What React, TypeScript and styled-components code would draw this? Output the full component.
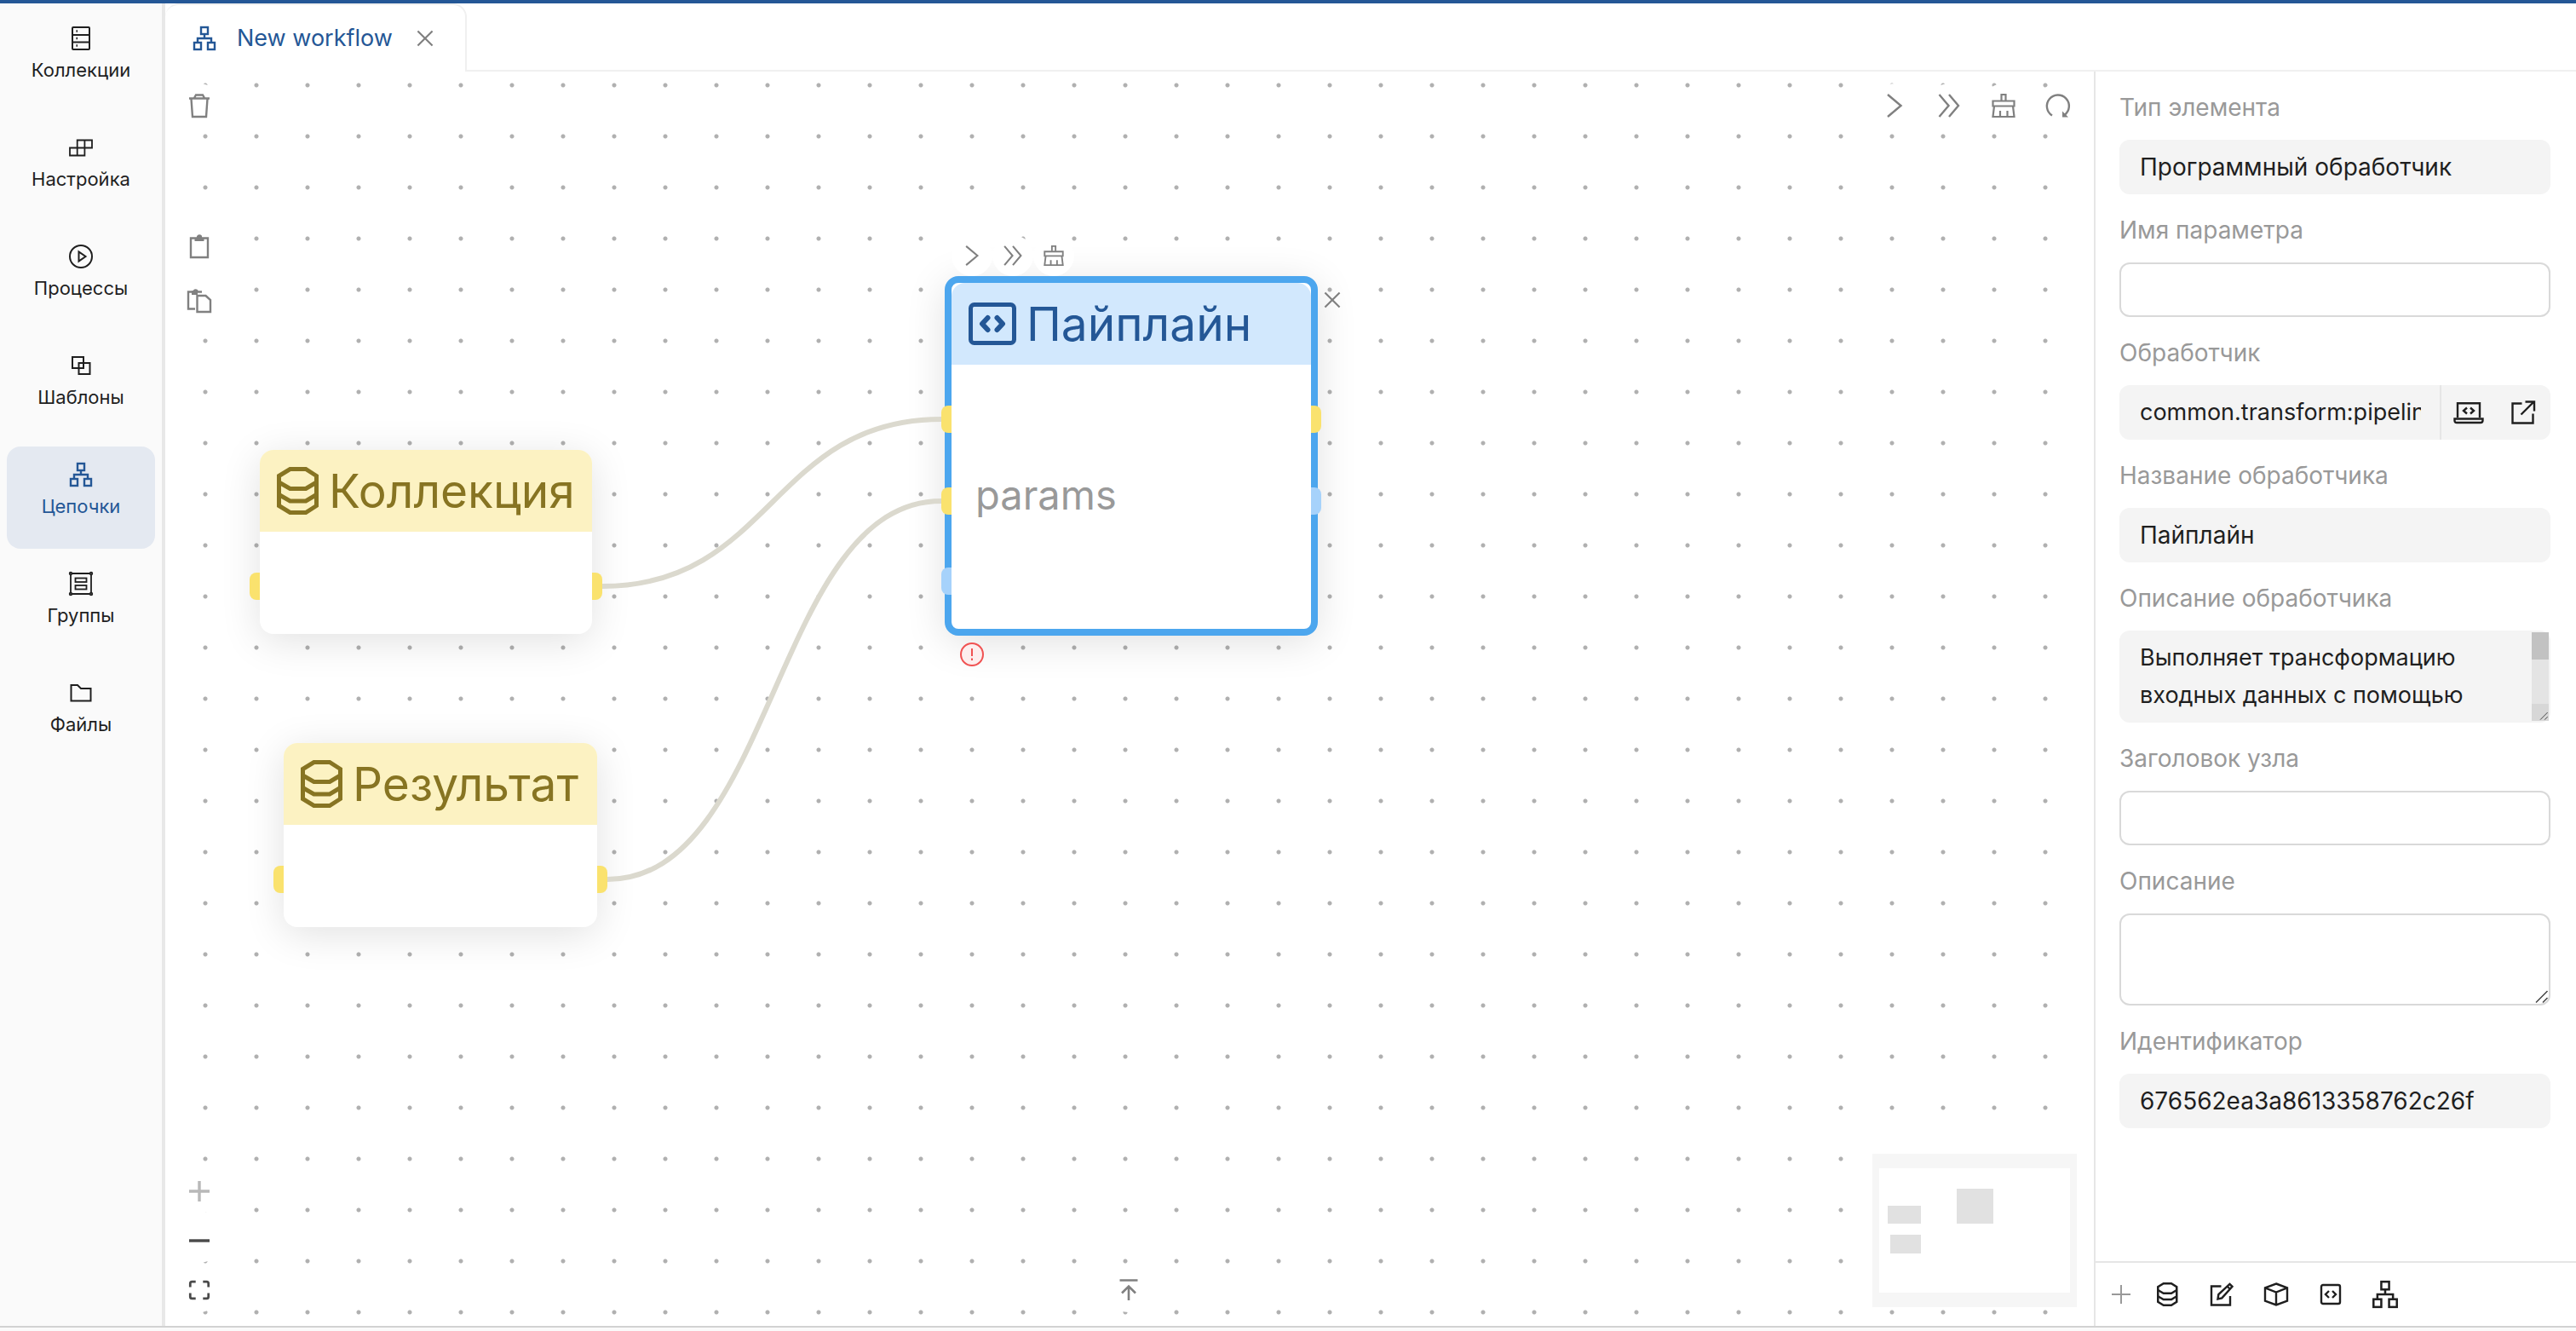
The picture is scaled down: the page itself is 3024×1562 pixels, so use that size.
import React, { useId, useState } from 'react';
import styled, { createGlobalStyle, css } from 'styled-components';

const color = {
  brand: '#245796',
  ink: '#1f1f1f',
  muted: '#999999',
  tool: '#808080',
  line: '#e6e6e6',
  soft: '#f4f4f4',
  yellow: '#fae26e',
  sky: '#a6d2fb',
};

const GlobalStyle = createGlobalStyle`
  *, *::before, *::after { box-sizing: border-box; }
  html, body, #root { height: 100%; }
  body {
    margin: 0;
    background: #ffffff;
    color: ${color.ink};
    font-family: Inter, "Noto Sans", sans-serif;
    font-size: 28px;
    line-height: 44px;
  }
  button, input, textarea { font: inherit; color: inherit; }
  button { border: 0; padding: 0; background: none; cursor: pointer; }
  svg { display: block; flex: none; }
`;

/* ---------- icons ---------- */

type IconProps = { size?: number; weight?: number };

const Svg = styled.svg.attrs({ fill: 'none', stroke: 'currentColor', 'aria-hidden': true })`
  overflow: visible;
`;

const Icon = ({ size = 28, weight = 2, children }: IconProps & { children: React.ReactNode }) => (
  <Svg width={size} height={size} viewBox="0 0 28 28" strokeWidth={weight}>
    {children}
  </Svg>
);

const ServerIcon = () => (
  <Icon>
    <rect x="4" y="1" width="20" height="26" rx="1" />
    <path d="M4 10h20M4 18.500h20" />
    <path d="M8.500 5.500h1.500M8.500 14h1.500M8.500 22.500h1.500" strokeWidth="2.500" />
  </Icon>
);
const BlocksIcon = () => (
  <Icon>
    <path d="M1 14.500h8.700v9H1zM9.700 14.500h8.700v9H9.700zM9.700 5.500h8.700v9H9.700zM18.400 5.500H27v9h-8.600z" strokeWidth="1.800" />
  </Icon>
);
const PlayIcon = () => (
  <Icon>
    <circle cx="14" cy="14" r="13" />
    <path d="M11.500 8.500v11l8-5.500z" />
  </Icon>
);
const OverlapIcon = () => (
  <Icon>
    <rect x="4" y="4" width="13" height="13" />
    <rect x="11.500" y="11" width="13" height="13" />
  </Icon>
);
const TreeIcon = (p: IconProps) => (
  <Icon {...p}>
    <rect x="10" y="1" width="8" height="8" />
    <rect x="2" y="19" width="8" height="8" />
    <rect x="18" y="19" width="8" height="8" />
    <path d="M14 9v5M6 19v-5h16v5" />
  </Icon>
);
const GroupIcon = () => (
  <Icon weight={1.8}>
    <path d="M4 2h20M4 26h20M2 4v20M26 4v20" />
    <circle cx="2" cy="2" r="1.300" />
    <circle cx="26" cy="2" r="1.300" />
    <circle cx="2" cy="26" r="1.300" />
    <circle cx="26" cy="26" r="1.300" />
    <rect x="7.500" y="7.500" width="13" height="4.500" />
    <rect x="7.500" y="16" width="13" height="4.500" />
  </Icon>
);
const FolderIcon = () => (
  <Icon>
    <path d="M2.500 5h7.500l4 4h11.500v14.500h-23z" />
  </Icon>
);
const CloseIcon = () => (
  <Icon size={20}>
    <path d="M2 2l24 24M26 2L2 26" strokeWidth="3" />
  </Icon>
);
const TrashIcon = () => (
  <Icon weight={2.4}>
    <path d="M2 5.500h24M8 5l2-3.500h8L20 5M4.500 6L6 27h16l1.500-21" />
  </Icon>
);
const ClipboardIcon = () => (
  <Icon weight={2.4}>
    <path d="M4 4.500h20V27H4z" />
    <path d="M8.500 4h3a2.500 2.500 0 0 1 5 0h3v4h-11z" fill="currentColor" stroke="none" />
    <circle cx="14" cy="3.500" r="2" />
  </Icon>
);
const PasteIcon = () => (
  <Icon weight={2.4}>
    <path d="M9 23.500H1V3.500h16" />
    <path d="M5 3.500h2.500a2 2 0 0 1 4 0" />
    <path d="M5 4h7v3H5z" fill="currentColor" stroke="none" />
    <path d="M11.500 8h10L27 13v14H11.500z" />
  </Icon>
);
const RunIcon = ({ size }: IconProps) => (
  <Icon size={size} weight={2.4}>
    <path d="M6 1l15.500 13L6 27" />
  </Icon>
);
const RunAllIcon = ({ size }: IconProps) => (
  <Icon size={size} weight={2.4}>
    <path d="M2.500 1l11 13-11 13M14 1l11 13-11 13" />
  </Icon>
);
const BrushIcon = ({ size }: IconProps) => (
  <Icon size={size} weight={2.2}>
    <path d="M11.500 8V1h5v7" />
    <path d="M1.500 8.500h25v6h-25z" />
    <path d="M3 14.500L1.500 27h25L25 14.500M10 20v7M18.500 20v7" />
  </Icon>
);
const ReloadIcon = () => (
  <Icon weight={2.4}>
    <path d="M7 25.500a13 13 0 1 1 14.500-.5" />
    <path d="M19 20.500v7h7z" fill="currentColor" stroke="none" />
  </Icon>
);
const ExpandUpIcon = () => (
  <Icon weight={2.6}>
    <path d="M3.500 2.500h21M14 26V9M6 17.500l8-8 8 8" />
  </Icon>
);
const PlusIcon = ({ size = 24, weight = 4 }: IconProps) => (
  <Icon size={size} weight={weight}>
    <path d="M0 14h28M14 0v28" />
  </Icon>
);
const MinusIcon = () => (
  <Icon size={24} weight={4}>
    <path d="M0 14h28" />
  </Icon>
);
const FitIcon = () => (
  <Icon size={24} weight={3.2}>
    <path d="M1.500 10V5q0-2.500 2.500-2.500h5M19 2.500h5q2.500 0 2.500 2.500v5M26.500 18v5q0 2.500-2.500 2.500h-5M9 25.500H4q-2.500 0-2.500-2.500v-5" />
  </Icon>
);
const DatabaseIcon = ({ size = 56 }: IconProps) => (
  <Svg height={size} width={(size * 49) / 56} viewBox="0 0 49 56" strokeWidth="5">
    <path d="M15.500 2.500H34L46.500 10.500V45.500L34 53.500H15.500L2.500 45.500V10.500Z" />
    <path d="M2.500 18L15.500 25.500H34L46.500 18M2.500 32.500L15.500 40H34L46.500 32.500" />
  </Svg>
);
const CodeBlockIcon = () => (
  <Svg width={56} height={50} viewBox="0 0 56 50" strokeWidth="5">
    <rect x="2.500" y="2.500" width="51" height="45" rx="4" />
    <path d="M22.500 18l-6.500 7 6.500 7M33.500 18l6.500 7-6.500 7" strokeWidth="6" strokeLinecap="round" strokeLinejoin="round" />
  </Svg>
);
const CodeIcon = () => (
  <Icon weight={2.4}>
    <rect x="3" y="3" width="22" height="22" rx="2" />
    <path d="M12 10l-4 4 4 4M16 10l4 4-4 4" />
  </Icon>
);
const EditIcon = () => (
  <Icon weight={2.4}>
    <path d="M13.500 4.500H2v22h22V16" />
    <path d="M9.500 19.500l.8-5.300L23.500 1.800l3 3L14.300 18.300z M20.500 4.500l3.500 3.500" />
  </Icon>
);
const CubeIcon = () => (
  <Icon weight={2.4}>
    <path d="M14 1.500l13 4.800v15.400l-13 4.800-13-4.800V6.300zM1 6.300l13 5.200 13-5.200M14 11.500v15" />
  </Icon>
);
const LaptopIcon = () => (
  <Svg width={36} height={28} viewBox="0 0 36 28" strokeWidth="2.400">
    <path d="M5 20V3.200h26V20" />
    <path d="M1.500 21.500h33v2q0 2.500-2.500 2.500H4q-2.500 0-2.500-2.500z" />
    <path d="M16 8.500l-4 3.500 4 3.500M20 8.500l4 3.500-4 3.500" />
  </Svg>
);
const ExternalIcon = () => (
  <Icon weight={2.4}>
    <path d="M12.500 3.500H1.500v23h24V15.500M11.500 16.500L26 2M16.500 1.500h10.500v11" />
  </Icon>
);
const GripIcon = ({ size = 14 }: IconProps) => (
  <Svg width={size} height={size} viewBox="0 0 14 14" strokeWidth="1.500">
    <path d="M0 13.500L13.500 0M8 13.500L13.500 8" />
  </Svg>
);

/* ---------- frame ---------- */

const Shell = styled.div`
  display: flex;
  flex-direction: column;
  height: 100vh;
  border-top: 4px solid ${color.brand};
`;
const Columns = styled.div`
  display: flex;
  flex: 1;
  min-height: 0;
`;
const BottomStrip = styled.footer`
  height: 6px;
  border-top: 2px solid #d2d2d2;
  background: #fafafa;
`;

const Sidebar = styled.nav`
  display: flex;
  flex-direction: column;
  gap: 8px;
  width: 194px;
  padding: 8px;
  border-right: 4px solid #e8e8e8;
  background: #fafafa;
`;
const NavItem = styled.button<{ $active?: boolean }>`
  display: flex;
  flex-direction: column;
  align-items: center;
  gap: 9px;
  height: 120px;
  padding-top: 19px;
  border-radius: 16px;
  font-size: 22px;
  line-height: 28px;
  ${(p) =>
    p.$active &&
    css`
      background: #e4e9f1;
      color: ${color.brand};
    `}
`;

const Workspace = styled.main`
  display: flex;
  flex: 1;
  flex-direction: column;
  min-width: 0;
`;
const TabBar = styled.div`
  display: flex;
  height: 80px;
`;
const Tab = styled.div`
  display: flex;
  align-items: center;
  width: 354px;
  padding: 0 37px 0 32px;
  border-top: 2px solid #f0f0f0;
  border-right: 2px solid #f0f0f0;
  border-radius: 16px 16px 0 0;
  color: ${color.brand};
`;
const TabTitle = styled.button`
  display: flex;
  flex: 1;
  align-items: center;
  gap: 24px;
  font-size: 27px;
`;
const TabClose = styled.button`
  color: ${color.tool};
`;
const TabRest = styled.div`
  flex: 1;
  border-bottom: 2px solid #f0f0f0;
`;
const Split = styled.div`
  display: flex;
  flex: 1;
  min-height: 0;
`;

/* ---------- canvas ---------- */

const Canvas = styled.section`
  position: relative;
  display: flex;
  flex: 1;
  flex-direction: column;
  justify-content: space-between;
  min-width: 0;
  overflow: hidden;
  padding: 14px 16px 16px 14px;
  background: radial-gradient(circle, #b0b0b0 2px, transparent 3px) 17px -14px / 60px 60px #ffffff;
`;
const TopTools = styled.div`
  display: flex;
  justify-content: space-between;
  align-items: flex-start;
`;
const BottomTools = styled.div`
  display: grid;
  grid-template-columns: 1fr auto 1fr;
  align-items: end;
`;
const ToolColumn = styled.div<{ $gap: number }>`
  display: flex;
  flex-direction: column;
  gap: ${(p) => p.$gap}px;
`;
const ToolRow = styled.div`
  display: flex;
  gap: 12px;
`;
const Spacer = styled.div`
  height: 89px;
`;
const RoundTool = styled.button<{ $tone?: string }>`
  display: grid;
  place-items: center;
  width: 52px;
  height: 52px;
  border-radius: 50%;
  background: #ffffff;
  color: ${(p) => p.$tone ?? color.tool};
`;
const Minimap = styled.div`
  display: flex;
  justify-self: end;
  width: 240px;
  height: 180px;
  margin: 0 4px 6px 0;
  padding: 17px 8px;
  background: #f6f6f6;
`;
const MiniView = styled.div`
  position: relative;
  flex: 1;
  background: #ffffff;
`;
const MiniNode = styled.span<{ $x: number; $y: number; $w: number; $h: number }>`
  position: absolute;
  left: ${(p) => p.$x}px;
  top: ${(p) => p.$y}px;
  width: ${(p) => p.$w}px;
  height: ${(p) => p.$h}px;
  background: #e1e1e1;
`;
const Edges = styled.svg`
  position: absolute;
  inset: 0;
  width: 100%;
  height: 100%;
  fill: none;
  stroke: #dbd9ce;
  stroke-width: 6px;
  pointer-events: none;
`;

const NodeBox = styled.article<{ $x: number; $y: number; $w: number; $selected?: boolean }>`
  position: absolute;
  left: ${(p) => p.$x}px;
  top: ${(p) => p.$y}px;
  width: ${(p) => p.$w}px;
  border: ${(p) => (p.$selected ? '8px solid #4ca6ee' : '0')};
  border-radius: 16px;
  background: #ffffff;
  box-shadow: 0 8px 48px rgba(0, 0, 0, 0.12);
`;
const NodeHeader = styled.header<{ $selected?: boolean }>`
  display: flex;
  align-items: center;
  gap: 12px;
  height: 96px;
  padding: 0 20px;
  border-radius: 16px 16px 0 0;
  background: ${(p) => (p.$selected ? '#d2e8fd' : '#fcf2c2')};
  color: ${(p) => (p.$selected ? color.brand : '#877422')};
`;
const NodeTitle = styled.h2`
  margin: 0;
  font-size: 55px;
  font-weight: 400;
  line-height: 64px;
  white-space: nowrap;
`;
const NodeBody = styled.div<{ $h: number }>`
  display: flex;
  align-items: center;
  height: ${(p) => p.$h}px;
  padding: 0 28px 4px;
  color: ${color.muted};
  font-size: 47px;
`;
const Port = styled.i<{ $side: 'left' | 'right'; $y: number; $tone: string }>`
  position: absolute;
  top: ${(p) => p.$y}px;
  width: 12px;
  height: 32px;
  background: ${(p) => p.$tone};
  ${(p) =>
    p.$side === 'left'
      ? css`
          right: 100%;
          border-radius: 8px 0 0 8px;
        `
      : css`
          left: 100%;
          border-radius: 0 8px 8px 0;
        `}
`;
const NodeTools = styled.div`
  position: absolute;
  left: 0;
  bottom: calc(100% + 8px);
  display: flex;
`;
const NodeTool = styled.button`
  display: grid;
  place-items: center;
  width: 48px;
  height: 48px;
  border-radius: 50%;
  background: #ffffff;
  color: ${color.tool};
`;
const NodeClose = styled.button`
  position: absolute;
  left: calc(100% + 15px);
  top: 10px;
  color: ${color.tool};
`;
const NodeError = styled.span`
  position: absolute;
  left: 10px;
  top: calc(100% + 16px);
`;

type PortSpec = { side: 'left' | 'right'; y: number; tone: string };
type NodeProps = {
  x: number;
  y: number;
  w: number;
  body: number;
  title: string;
  icon: React.ReactNode;
  ports: PortSpec[];
  selected?: boolean;
  text?: string;
  children?: React.ReactNode;
};

const FlowNode = ({ x, y, w, body, title, icon, ports, selected, text, children }: NodeProps) => (
  <NodeBox $x={x} $y={y} $w={w} $selected={selected}>
    <NodeHeader $selected={selected}>
      {icon}
      <NodeTitle>{title}</NodeTitle>
    </NodeHeader>
    <NodeBody $h={body}>{text}</NodeBody>
    {ports.map((p) => (
      <Port key={p.side + p.y} $side={p.side} $y={p.y} $tone={p.tone} />
    ))}
    {children}
  </NodeBox>
);

const dataPorts: PortSpec[] = [
  { side: 'left', y: 144, tone: color.yellow },
  { side: 'right', y: 144, tone: color.yellow },
];
const pipelinePorts: PortSpec[] = [
  { side: 'left', y: 144, tone: color.yellow },
  { side: 'left', y: 240, tone: color.yellow },
  { side: 'left', y: 334, tone: color.sky },
  { side: 'right', y: 144, tone: color.yellow },
  { side: 'right', y: 240, tone: color.sky },
];

const curve = (x1: number, y1: number, x2: number, y2: number) => {
  const mid = (x1 + x2) / 2;
  return `M${x1} ${y1}C${mid} ${y1} ${mid} ${y2} ${x2} ${y2}`;
};

/* ---------- properties panel ---------- */

const Panel = styled.aside`
  display: flex;
  flex-direction: column;
  width: 566px;
  border-left: 2px solid ${color.line};
`;
const Form = styled.form`
  display: flex;
  flex: 1;
  flex-direction: column;
  gap: 20px;
  padding: 20px 30px 20px 28px;
`;
const Field = styled.div`
  display: flex;
  flex-direction: column;
  gap: 16px;
`;
const Label = styled.label`
  color: ${color.muted};
`;
const boxed = css<{ $filled?: boolean }>`
  width: 100%;
  min-width: 0;
  border: 2px solid ${(p) => (p.$filled ? color.soft : '#d9d9d9')};
  border-radius: 12px;
  outline: 0;
  background: ${(p) => (p.$filled ? color.soft : '#ffffff')};
`;
const Input = styled.input<{ $filled?: boolean }>`
  ${boxed}
  height: 64px;
  padding: 0 22px;
`;
const AreaWrap = styled.div`
  position: relative;
  display: flex;
`;
const Area = styled.textarea<{ $filled?: boolean }>`
  ${boxed}
  height: 108px;
  padding: 8px 40px 8px 22px;
  overflow: hidden;
  resize: none;
  font-size: 27px;
`;
const Grip = styled.span`
  position: absolute;
  right: 3px;
  bottom: 3px;
  color: #444444;
`;
const ScrollTrack = styled.span`
  position: absolute;
  top: 2px;
  right: 2px;
  bottom: 2px;
  width: 20px;
  border-top: 32px solid #c2c2c2;
  border-bottom: 20px solid #d7d7d7;
  background: #e4e4e4;
`;
const InputGroup = styled.div`
  display: flex;
  height: 64px;
  border-radius: 12px;
  background: ${color.soft};
`;
const GroupInput = styled.input`
  flex: 1;
  min-width: 0;
  margin: 0 22px 0 24px;
  padding: 0;
  border: 0;
  outline: 0;
  background: none;
  font-size: 27px;
`;
const GroupActions = styled.div`
  display: flex;
  align-items: center;
  gap: 32px;
  padding: 0 18px 0 14px;
  border-left: 2px solid ${color.line};
`;
const PanelBar = styled.div`
  display: flex;
  align-items: center;
  gap: 32px;
  height: 76px;
  padding: 0 16px;
  border-top: 2px solid ${color.line};
`;
const AddMark = styled.button`
  display: grid;
  place-items: center;
  width: 28px;
  margin-right: -8px;
  color: ${color.muted};
`;
const BarButton = styled.button`
  display: grid;
  place-items: center;
  width: 32px;
  height: 36px;
`;

type TextFieldProps = { label: string; initial?: string; readOnly?: boolean };

const TextField = ({ label, initial = '', readOnly }: TextFieldProps) => {
  const id = useId();
  const [value, setValue] = useState(initial);
  return (
    <Field>
      <Label htmlFor={id}>{label}</Label>
      <Input id={id} $filled={readOnly} readOnly={readOnly} value={value} onChange={(e) => setValue(e.target.value)} />
    </Field>
  );
};

const AreaField = ({ label, initial = '', readOnly }: TextFieldProps) => {
  const id = useId();
  const [value, setValue] = useState(initial);
  return (
    <Field>
      <Label htmlFor={id}>{label}</Label>
      <AreaWrap>
        <Area id={id} $filled={readOnly} readOnly={readOnly} value={value} onChange={(e) => setValue(e.target.value)} />
        {readOnly && <ScrollTrack />}
        <Grip>
          <GripIcon size={readOnly ? 9 : 14} />
        </Grip>
      </AreaWrap>
    </Field>
  );
};

const navItems = [
  { title: 'Коллекции', icon: <ServerIcon /> },
  { title: 'Настройка', icon: <BlocksIcon /> },
  { title: 'Процессы', icon: <PlayIcon /> },
  { title: 'Шаблоны', icon: <OverlapIcon /> },
  { title: 'Цепочки', icon: <TreeIcon weight={2.4} /> },
  { title: 'Группы', icon: <GroupIcon /> },
  { title: 'Файлы', icon: <FolderIcon /> },
];

export default function App() {
  const [section, setSection] = useState('Цепочки');
  const handlerId = useId();

  return (
    <>
      <GlobalStyle />
      <Shell>
        <Columns>
          <Sidebar>
            {navItems.map((item) => (
              <NavItem key={item.title} $active={item.title === section} onClick={() => setSection(item.title)}>
                {item.icon}
                {item.title}
              </NavItem>
            ))}
          </Sidebar>
          <Workspace>
            <TabBar>
              <Tab>
                <TabTitle>
                  <TreeIcon weight={2.4} />
                  New workflow
                </TabTitle>
                <TabClose>
                  <CloseIcon />
                </TabClose>
              </Tab>
              <TabRest />
            </TabBar>
            <Split>
              <Canvas>
                <TopTools>
                  <ToolColumn $gap={12}>
                    <RoundTool><TrashIcon /></RoundTool>
                    <Spacer />
                    <RoundTool><ClipboardIcon /></RoundTool>
                    <RoundTool><PasteIcon /></RoundTool>
                  </ToolColumn>
                  <ToolRow>
                    <RoundTool><RunIcon /></RoundTool>
                    <RoundTool><RunAllIcon /></RoundTool>
                    <RoundTool><BrushIcon /></RoundTool>
                    <RoundTool><ReloadIcon /></RoundTool>
                  </ToolRow>
                </TopTools>
                <BottomTools>
                  <ToolColumn $gap={6}>
                    <RoundTool $tone="#b8b8b8"><PlusIcon /></RoundTool>
                    <RoundTool $tone="#4a4a4a"><MinusIcon /></RoundTool>
                    <RoundTool $tone="#4a4a4a"><FitIcon /></RoundTool>
                  </ToolColumn>
                  <RoundTool><ExpandUpIcon /></RoundTool>
                  <Minimap>
                    <MiniView>
                      <MiniNode $x={10} $y={44} $w={39} $h={21} />
                      <MiniNode $x={13} $y={78} $w={36} $h={22} />
                      <MiniNode $x={91} $y={24} $w={43} $h={41} />
                    </MiniView>
                  </Minimap>
                </BottomTools>

                <FlowNode x={111} y={444} w={390} body={120} title="Коллекция" icon={<DatabaseIcon />} ports={dataPorts} />
                <FlowNode x={139} y={788} w={368} body={120} title="Результат" icon={<DatabaseIcon />} ports={dataPorts} />
                <FlowNode
                  x={915}
                  y={240}
                  w={438}
                  body={310}
                  title="Пайплайн"
                  icon={<CodeBlockIcon />}
                  ports={pipelinePorts}
                  text="params"
                  selected
                >
                  <NodeTools>
                    <NodeTool><RunIcon size={24} /></NodeTool>
                    <NodeTool><RunAllIcon size={24} /></NodeTool>
                    <NodeTool><BrushIcon size={24} /></NodeTool>
                  </NodeTools>
                  <NodeClose><CloseIcon /></NodeClose>
                  <NodeError>
                    <Svg width={28} height={28} viewBox="0 0 28 28" strokeWidth="2" color="#f05252">
                      <circle cx="14" cy="14" r="13" fill="#fdeeee" />
                      <path d="M14 7v9M14 18.500v2.500" />
                    </Svg>
                  </NodeError>
                </FlowNode>
                <Edges>
                  <path d={curve(513, 604, 911, 408)} />
                  <path d={curve(519, 948, 911, 504)} />
                </Edges>
              </Canvas>

              <Panel>
                <Form>
                  <TextField label="Тип элемента" initial="Программный обработчик" readOnly />
                  <TextField label="Имя параметра" />
                  <Field>
                    <Label htmlFor={handlerId}>Обработчик</Label>
                    <InputGroup>
                      <GroupInput id={handlerId} readOnly value="common.transform:pipeline" />
                      <GroupActions>
                        <button type="button"><LaptopIcon /></button>
                        <button type="button"><ExternalIcon /></button>
                      </GroupActions>
                    </InputGroup>
                  </Field>
                  <TextField label="Название обработчика" initial="Пайплайн" readOnly />
                  <AreaField label="Описание обработчика" initial="Выполняет трансформацию входных данных с помощью" readOnly />
                  <TextField label="Заголовок узла" />
                  <AreaField label="Описание" />
                  <TextField label="Идентификатор" initial="676562ea3a8613358762c26f" readOnly />
                </Form>
                <PanelBar>
                  <AddMark><PlusIcon size={22} weight={2.5} /></AddMark>
                  <BarButton><DatabaseIcon size={28} /></BarButton>
                  <BarButton><EditIcon /></BarButton>
                  <BarButton><CubeIcon /></BarButton>
                  <BarButton><CodeIcon /></BarButton>
                  <BarButton><TreeIcon size={32} weight={2.2} /></BarButton>
                </PanelBar>
              </Panel>
            </Split>
          </Workspace>
        </Columns>
        <BottomStrip />
      </Shell>
    </>
  );
}
